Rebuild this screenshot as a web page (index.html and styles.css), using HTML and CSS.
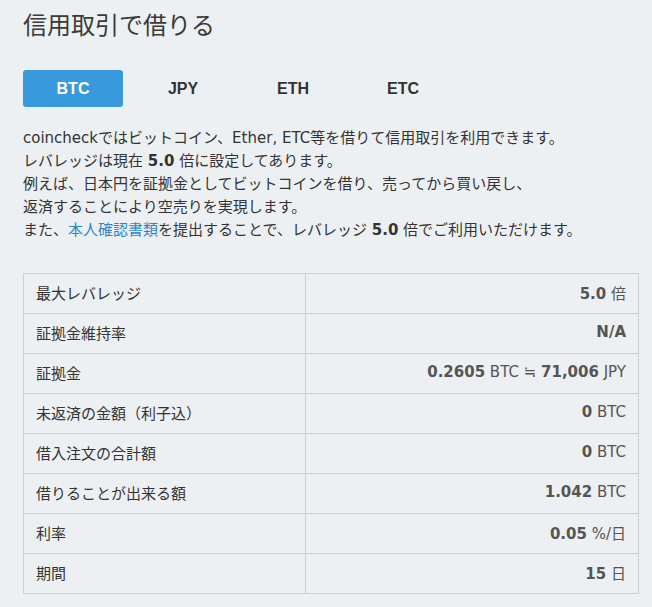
FILE: index.html
```html
<!DOCTYPE html>
<html lang="ja">
<head>
    <meta charset="UTF-8">
    <title>信用取引で借りる</title>
    <link rel="stylesheet" href="styles.css">
</head>
<body>

<div class="page">
    <h1 class="title">信用取引で借りる</h1>

    <div class="tabs">
        <button class="tab active">BTC</button>
        <button class="tab">JPY</button>
        <button class="tab">ETH</button>
        <button class="tab">ETC</button>
    </div>

    <p class="intro">
        coincheckではビットコイン、Ether, ETC等を借りて信用取引を利用できます。<br>
        レバレッジは現在 <b>5.0</b> 倍に設定してあります。<br>
        例えば、日本円を証拠金としてビットコインを借り、売ってから買い戻し、<br>
        返済することにより空売りを実現します。<br>
        また、<a href="#">本人確認書類</a>を提出することで、レバレッジ <b>5.0</b> 倍でご利用いただけます。
    </p>

    <table class="summary">
        <tr><td>最大レバレッジ</td><td><b>5.0</b> 倍</td></tr>
        <tr><td>証拠金維持率</td><td><b>N/A</b></td></tr>
        <tr><td>証拠金</td><td><b>0.2605</b> BTC ≒ <b>71,006</b> JPY</td></tr>
        <tr><td>未返済の金額（利子込）</td><td><b>0</b> BTC</td></tr>
        <tr><td>借入注文の合計額</td><td><b>0</b> BTC</td></tr>
        <tr><td>借りることが出来る額</td><td><b>1.042</b> BTC</td></tr>
        <tr><td>利率</td><td><b>0.05</b> %/日</td></tr>
        <tr><td>期間</td><td><b>15</b> 日</td></tr>
    </table>
</div>

</body>
</html>
```

FILE: styles.css
```css
* {
    box-sizing: border-box;
}

body {
    margin: 0;
    padding: 0;
    background-color: #edf0f2;
    color: #333;
    font-family: 'DejaVu Sans', 'Noto Sans CJK JP', sans-serif;
}

.page {
    padding: 10px 13px 0 23px;
}

.title {
    margin: 0;
    font-size: 24px;
    font-weight: normal;
    line-height: 32px;
    color: #3a3a3a;
}

.tabs {
    display: flex;
    gap: 10px;
    margin-top: 28px;
}
.tab {
    width: 100px;
    height: 37px;
    border: none;
    border-radius: 3px;
    background: none;
    font-family: 'Liberation Sans', Arial, sans-serif;
    font-size: 16px;
    font-weight: bold;
    color: #333;
}
.tab.active {
    background-color: #3899dd;
    color: #fff;
}

.intro {
    margin: 20px 0 0;
    font-size: 15px;
    line-height: 23px;
}
.intro a {
    color: #2a86cc;
    text-decoration: none;
}

.summary {
    width: 100%;
    margin-top: 31px;
    border-collapse: collapse;
    font-size: 15px;
}
.summary td {
    height: 40px;
    padding: 0 12px 3px;
    border: 1px solid #cdd0d2;
}
.summary td:first-child {
    width: 282px;
}
.summary td:last-child {
    text-align: right;
    color: #555;
}
```
